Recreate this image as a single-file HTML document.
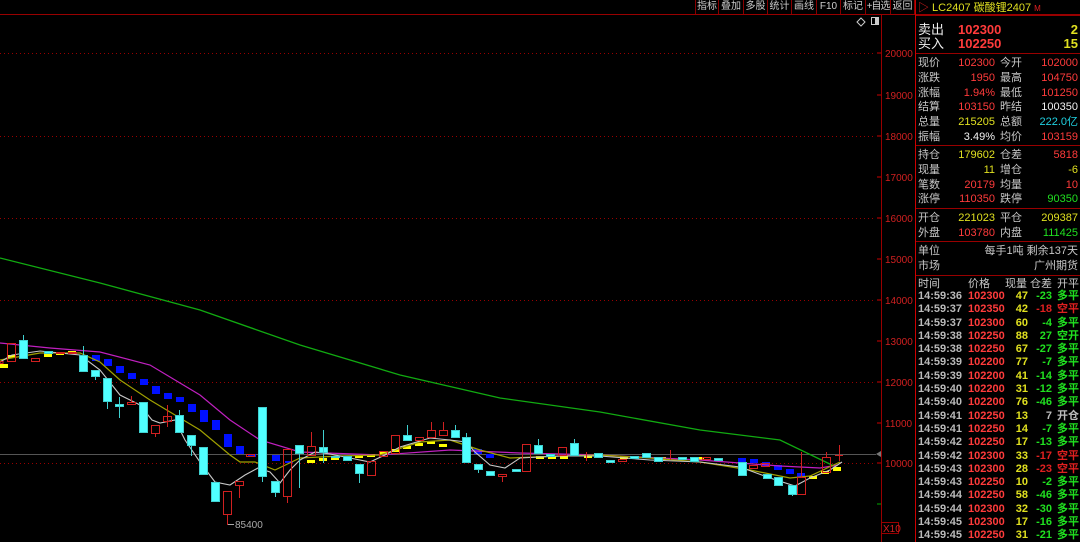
<!DOCTYPE html>
<html><head><meta charset="utf-8"><style>
*{margin:0;padding:0;box-sizing:border-box}
html,body{width:1080px;height:542px;overflow:hidden}
body{background:#000;position:relative;font-family:"Liberation Sans","Noto Sans CJK SC",sans-serif;font-size:12px;color:#c8c8c8}
.a{position:absolute;white-space:nowrap;line-height:14px}
.tb{position:absolute;top:0;height:14px;border-right:1px solid #800;font-size:10px;line-height:13px;text-align:center;color:#ccc;white-space:nowrap;overflow:hidden}
.r{color:#ff3b3b}.y{color:#e0e020}.g{color:#20e020}.w{color:#f0f0f0}.c{color:#20d0e0}.dr{color:#e02020}.gr{color:#bbb}
.ra{text-align:right}
.sep{position:absolute;left:916px;width:164px;height:1px;background:#900}
.q>div{position:relative;height:14.8px}
.t>div{position:relative;height:13.3px}
.t .a{line-height:13px}
</style></head><body>
<svg width="1080" height="542" style="position:absolute;left:0;top:0">
<line x1="0" y1="14.5" x2="1080" y2="14.5" stroke="#900"/>
<line x1="881.5" y1="15" x2="881.5" y2="542" stroke="#900"/>
<line x1="915.5" y1="0" x2="915.5" y2="542" stroke="#c00"/>
<g stroke="#900" stroke-dasharray="1,3">
<line x1="0" y1="53.5" x2="876" y2="53.5"/><line x1="0" y1="136.5" x2="876" y2="136.5"/><line x1="0" y1="218.5" x2="876" y2="218.5"/><line x1="0" y1="300.5" x2="876" y2="300.5"/><line x1="0" y1="382.5" x2="876" y2="382.5"/><line x1="0" y1="463.5" x2="876" y2="463.5"/></g>
<line x1="0" y1="454.5" x2="876" y2="454.5" stroke="#555"/>
<polygon points="876,454 881,451 881,457" fill="#777"/>
<g stroke="#c00"><line x1="877" y1="53" x2="881" y2="53"/><line x1="877" y1="95" x2="881" y2="95"/><line x1="877" y1="136" x2="881" y2="136"/><line x1="877" y1="177" x2="881" y2="177"/><line x1="877" y1="218" x2="881" y2="218"/><line x1="877" y1="259" x2="881" y2="259"/><line x1="877" y1="300" x2="881" y2="300"/><line x1="877" y1="341" x2="881" y2="341"/><line x1="877" y1="382" x2="881" y2="382"/><line x1="877" y1="423" x2="881" y2="423"/><line x1="877" y1="463" x2="881" y2="463"/></g>
<line x1="877" y1="504" x2="881" y2="504" stroke="#0a0"/>
<g fill="#d02020" font-size="10" font-family="Liberation Sans">
<text x="885" y="57">20000</text><text x="885" y="99">19000</text><text x="885" y="140">18000</text><text x="885" y="181">17000</text><text x="885" y="222">16000</text><text x="885" y="263">15000</text><text x="885" y="304">14000</text><text x="885" y="345">13000</text><text x="885" y="386">12000</text><text x="885" y="427">11000</text><text x="885" y="467">10000</text></g>
<rect x="881.5" y="522.5" width="17" height="11" fill="none" stroke="#900"/><text x="883" y="532" fill="#d02020" font-size="10">X10</text>
<path d="M861 18 l4 4 -4 4 -4 -4z" fill="none" stroke="#ccc"/><rect x="871.5" y="17.5" width="7" height="7" fill="none" stroke="#ccc"/><rect x="875" y="18" width="3" height="6" fill="#ccc"/>
<polyline fill="none" stroke="#1a1" stroke-width="1.3" points="0,258 100,283 200,310 300,345 400,375 500,398 600,412 700,430 780,440 836,467"/>
<g fill="#0010ff">
<rect x="92" y="355" width="8" height="6"/><rect x="104" y="359" width="8" height="7"/><rect x="116" y="366" width="8" height="7"/><rect x="128" y="373" width="8" height="6"/><rect x="140" y="379" width="8" height="6"/><rect x="152" y="386" width="8" height="8"/><rect x="164" y="393" width="8" height="6"/><rect x="176" y="397" width="8" height="5"/><rect x="188" y="404" width="8" height="8"/><rect x="200" y="410" width="8" height="12"/><rect x="212" y="420" width="8" height="10"/><rect x="224" y="434" width="8" height="13"/><rect x="236" y="446" width="8" height="8"/><rect x="248" y="454" width="8" height="3"/><rect x="272" y="455" width="8" height="6"/><rect x="285" y="461" width="8" height="2"/>
<rect x="462" y="443" width="8" height="5"/><rect x="474" y="449" width="8" height="5"/><rect x="486" y="454" width="8" height="4"/><rect x="738" y="458" width="8" height="4"/><rect x="750" y="459" width="8" height="4"/><rect x="762" y="462" width="8" height="4"/><rect x="774" y="465" width="8" height="5"/><rect x="786" y="469" width="8" height="5"/><rect x="797" y="473" width="8" height="4"/></g>
<g fill="#ffff00">
<rect x="0" y="364" width="8" height="4"/><rect x="8" y="355" width="8" height="3"/><rect x="20" y="352" width="8" height="3"/><rect x="44" y="354" width="8" height="3"/><rect x="56" y="352" width="8" height="3"/><rect x="68" y="351" width="8" height="3"/>
<rect x="307" y="460" width="8" height="3"/><rect x="319" y="458" width="8" height="3"/><rect x="331" y="457" width="8" height="3"/><rect x="343" y="456" width="8" height="3"/><rect x="355" y="455" width="8" height="3"/><rect x="367" y="454" width="8" height="3"/><rect x="379" y="452" width="8" height="3"/><rect x="391" y="449" width="8" height="3"/><rect x="403" y="446" width="8" height="3"/><rect x="415" y="443" width="8" height="3"/><rect x="427" y="441" width="8" height="3"/><rect x="439" y="444" width="8" height="3"/>
<rect x="536" y="456" width="8" height="3"/><rect x="548" y="456" width="8" height="3"/><rect x="560" y="456" width="8" height="3"/><rect x="584" y="455" width="8" height="3"/><rect x="620" y="456" width="8" height="3"/><rect x="658" y="457" width="8" height="3"/><rect x="696" y="457" width="8" height="3"/>
<rect x="809" y="476" width="8" height="3"/><rect x="821" y="471" width="8" height="3"/><rect x="833" y="467" width="8" height="4"/></g>
<polyline fill="none" stroke="#c020c0" stroke-width="1.2" points="0,343 50,348 100,352 150,365 200,395 230,420 260,440 300,452 380,455 450,450 520,453 600,455 700,460 780,466 820,468 838,465"/>
<polyline fill="none" stroke="#a0a000" stroke-width="1.2" points="0,360 40,353 80,353 100,362 120,380 150,400 180,418 200,430 230,455 240,462 255,462 275,470 300,458 340,456 380,455 420,442 450,440 465,445 480,450 510,458 560,456 600,455 650,458 700,462 750,470 790,478 810,476 840,462"/>
<polyline fill="none" stroke="#c8c8c8" stroke-width="1.1" points="0,362 12,355 40,351 80,355 100,370 120,395 140,405 152,420 160,423 175,420 185,440 200,462 215,482 230,485 245,475 258,468 270,472 280,483 290,470 300,460 315,452 330,454 350,458 370,462 385,455 400,447 430,438 450,440 466,442 475,452 490,465 505,468 520,458 560,456 600,456 650,460 700,462 740,467 770,478 795,486 810,478 830,470 842,462"/>
<g stroke-width="1">
<g fill="#50ffff" stroke="#40d0d0">
<rect x="19.5" y="340.5" width="8" height="18"/><line x1="23.5" y1="335" x2="23.5" y2="340"/>
<rect x="44.5" y="351.5" width="8" height="2"/>
<rect x="79.5" y="355.5" width="8" height="16"/><line x1="83.5" y1="346" x2="83.5" y2="355"/>
<rect x="91.5" y="370.5" width="8" height="6"/><line x1="95.5" y1="376" x2="95.5" y2="380"/>
<rect x="103.5" y="378.5" width="8" height="23"/><line x1="107.5" y1="401" x2="107.5" y2="409"/>
<rect x="115.5" y="404.5" width="8" height="2"/><line x1="119.5" y1="397" x2="119.5" y2="418"/>
<rect x="139.5" y="402.5" width="8" height="30"/>
<rect x="175.5" y="415.5" width="8" height="17"/><line x1="179.5" y1="410" x2="179.5" y2="415"/>
<rect x="187.5" y="435.5" width="8" height="10"/><line x1="191.5" y1="445" x2="191.5" y2="456"/>
<rect x="199.5" y="447.5" width="8" height="27"/>
<rect x="211.5" y="482.5" width="8" height="19"/>
<rect x="258.5" y="407.5" width="8" height="69"/><line x1="262.5" y1="476" x2="262.5" y2="482"/>
<rect x="271.5" y="481.5" width="8" height="11"/><line x1="275.5" y1="492" x2="275.5" y2="497"/>
<rect x="295.5" y="445.5" width="8" height="8"/><line x1="299.5" y1="453" x2="299.5" y2="488"/>
<rect x="319.5" y="447.5" width="8" height="5"/><line x1="323.5" y1="430" x2="323.5" y2="463"/>
<rect x="331.5" y="456.5" width="8" height="1"/>
<rect x="343.5" y="456.5" width="8" height="4"/>
<rect x="355.5" y="464.5" width="8" height="9"/><line x1="359.5" y1="473" x2="359.5" y2="483"/>
<rect x="403.5" y="435.5" width="8" height="5"/><line x1="407.5" y1="425" x2="407.5" y2="435"/>
<rect x="451.5" y="430.5" width="8" height="7"/><line x1="455.5" y1="425" x2="455.5" y2="430"/>
<rect x="462.5" y="437.5" width="8" height="25"/><line x1="466.5" y1="433" x2="466.5" y2="437"/>
<rect x="474.5" y="464.5" width="8" height="5"/><line x1="478.5" y1="469" x2="478.5" y2="473"/>
<rect x="486.5" y="471.5" width="8" height="4"/>
<rect x="512.5" y="469.5" width="8" height="2"/>
<rect x="534.5" y="445.5" width="8" height="8"/><line x1="538.5" y1="439" x2="538.5" y2="445"/>
<rect x="546.5" y="454.5" width="8" height="2"/>
<rect x="570.5" y="443.5" width="8" height="12"/><line x1="574.5" y1="439" x2="574.5" y2="443"/>
<rect x="594.5" y="453.5" width="8" height="4"/>
<rect x="606.5" y="460.5" width="8" height="2"/>
<rect x="630.5" y="456.5" width="8" height="2"/>
<rect x="642.5" y="453.5" width="8" height="4"/>
<rect x="654.5" y="457.5" width="8" height="4"/>
<rect x="678.5" y="457.5" width="8" height="2"/>
<rect x="690.5" y="457.5" width="8" height="4"/>
<rect x="714.5" y="458.5" width="8" height="2"/>
<rect x="738.5" y="462.5" width="8" height="13"/>
<rect x="763.5" y="474.5" width="8" height="4"/>
<rect x="774.5" y="477.5" width="8" height="8"/>
<rect x="788.5" y="485.5" width="8" height="9"/><line x1="792.5" y1="494" x2="792.5" y2="496"/>
</g>
<g fill="none" stroke="#d02020">
<rect x="0" y="361.5" width="3" height="2"/>
<rect x="7.5" y="343.5" width="8" height="18"/>
<rect x="31.5" y="358.5" width="8" height="3"/>
<rect x="56.5" y="352.5" width="8" height="1"/><rect x="68.5" y="352.5" width="8" height="1"/>
<rect x="127.5" y="402.5" width="8" height="2"/><line x1="131.5" y1="396" x2="131.5" y2="402"/>
<rect x="151.5" y="425.5" width="8" height="8"/><line x1="155.5" y1="433" x2="155.5" y2="437"/>
<rect x="163.5" y="416.5" width="8" height="5"/><line x1="167.5" y1="405" x2="167.5" y2="427"/>
<rect x="223.5" y="491.5" width="8" height="23"/><line x1="227.5" y1="514" x2="227.5" y2="525"/>
<rect x="235.5" y="481.5" width="8" height="4"/><line x1="239.5" y1="485" x2="239.5" y2="498"/>
<rect x="246.5" y="454.5" width="8" height="2"/>
<rect x="283.5" y="449.5" width="8" height="47"/><line x1="287.5" y1="496" x2="287.5" y2="503"/>
<rect x="307.5" y="446.5" width="8" height="9"/><line x1="311.5" y1="432" x2="311.5" y2="446"/>
<rect x="367.5" y="461.5" width="8" height="14"/>
<rect x="379.5" y="451.5" width="8" height="5"/>
<rect x="391.5" y="435.5" width="8" height="18"/>
<rect x="415.5" y="437.5" width="8" height="3"/>
<rect x="427.5" y="430.5" width="8" height="7"/><line x1="431.5" y1="422" x2="431.5" y2="430"/>
<rect x="439.5" y="430.5" width="8" height="5"/><line x1="443.5" y1="422" x2="443.5" y2="430"/>
<rect x="498.5" y="474.5" width="8" height="2"/><line x1="502.5" y1="476" x2="502.5" y2="482"/>
<rect x="522.5" y="444.5" width="8" height="27"/>
<rect x="558.5" y="447.5" width="8" height="8"/>
<line x1="586.5" y1="452" x2="586.5" y2="461"/>
<rect x="618.5" y="459.5" width="8" height="2"/>
<line x1="670.5" y1="450" x2="670.5" y2="460"/>
<rect x="702.5" y="457.5" width="8" height="2"/>
<rect x="749.5" y="465.5" width="8" height="3"/>
<rect x="761.5" y="463.5" width="8" height="3"/>
<rect x="797.5" y="477.5" width="8" height="17"/><line x1="801.5" y1="452" x2="801.5" y2="477"/>
<rect x="822.5" y="457.5" width="8" height="15"/><line x1="826.5" y1="452" x2="826.5" y2="457"/>
<line x1="835" y1="455.5" x2="843" y2="455.5"/><line x1="839.5" y1="445" x2="839.5" y2="461"/>
</g></g>
<line x1="228" y1="524.5" x2="234" y2="524.5" stroke="#aaa"/>
<text x="235" y="528" fill="#aaa" font-size="10">85400</text>
</svg>
<div class="tb" style="left:695px;width:24px;border-left:1px solid #800">指标</div>
<div class="tb" style="left:719px;width:25px">叠加</div>
<div class="tb" style="left:744px;width:24px">多股</div>
<div class="tb" style="left:768px;width:24px">统计</div>
<div class="tb" style="left:792px;width:25px">画线</div>
<div class="tb" style="left:817px;width:24px">F10</div>
<div class="tb" style="left:841px;width:25px">标记</div>
<div class="tb" style="left:866px;width:25px;letter-spacing:-1px">+自选</div>
<div class="tb" style="left:891px;width:24px">返回</div>
<div class="a" style="left:918px;top:1px;font-size:11px;color:#e0e020"><span style="color:#e02020">▷</span> LC2407 碳酸锂2407 <span style="color:#e02020;font-size:8px">M</span></div>
<div class="sep" style="top:15px"></div>
<div class="a w" style="left:918px;top:23px;font-size:13px">卖出</div><div class="a r" style="left:958px;top:23px;font-size:13px;font-weight:bold">102300</div><div class="a y ra" style="left:1030px;width:48px;top:23px;font-size:13px;font-weight:bold">2</div>
<div class="a w" style="left:918px;top:37px;font-size:13px">买入</div><div class="a r" style="left:958px;top:37px;font-size:13px;font-weight:bold">102250</div><div class="a y ra" style="left:1030px;width:48px;top:37px;font-size:13px;font-weight:bold">15</div>
<div class="sep" style="top:53px"></div>
<div class="q" style="position:absolute;left:918px;top:56px;width:160px;font-size:11px">
<div><span class="a">现价</span><span class="a r ra" style="left:20px;width:57px">102300</span><span class="a" style="left:82px">今开</span><span class="a r ra" style="left:100px;width:60px">102000</span></div>
<div><span class="a">涨跌</span><span class="a r ra" style="left:20px;width:57px">1950</span><span class="a" style="left:82px">最高</span><span class="a r ra" style="left:100px;width:60px">104750</span></div>
<div><span class="a">涨幅</span><span class="a r ra" style="left:20px;width:57px">1.94%</span><span class="a" style="left:82px">最低</span><span class="a r ra" style="left:100px;width:60px">101250</span></div>
<div><span class="a">结算</span><span class="a r ra" style="left:20px;width:57px">103150</span><span class="a" style="left:82px">昨结</span><span class="a w ra" style="left:100px;width:60px">100350</span></div>
<div><span class="a">总量</span><span class="a y ra" style="left:20px;width:57px">215205</span><span class="a" style="left:82px">总额</span><span class="a c ra" style="left:100px;width:60px">222.0亿</span></div>
<div><span class="a">振幅</span><span class="a w ra" style="left:20px;width:57px">3.49%</span><span class="a" style="left:82px">均价</span><span class="a r ra" style="left:100px;width:60px">103159</span></div>
</div>
<div class="sep" style="top:145px"></div>
<div class="q" style="position:absolute;left:918px;top:148px;width:160px;font-size:11px">
<div><span class="a">持仓</span><span class="a y ra" style="left:20px;width:57px">179602</span><span class="a" style="left:82px">仓差</span><span class="a r ra" style="left:100px;width:60px">5818</span></div>
<div><span class="a">现量</span><span class="a y ra" style="left:20px;width:57px">11</span><span class="a" style="left:82px">增仓</span><span class="a y ra" style="left:100px;width:60px">-6</span></div>
<div><span class="a">笔数</span><span class="a r ra" style="left:20px;width:57px">20179</span><span class="a" style="left:82px">均量</span><span class="a r ra" style="left:100px;width:60px">10</span></div>
<div><span class="a">涨停</span><span class="a r ra" style="left:20px;width:57px">110350</span><span class="a" style="left:82px">跌停</span><span class="a g ra" style="left:100px;width:60px">90350</span></div>
</div>
<div class="sep" style="top:208px"></div>
<div class="q" style="position:absolute;left:918px;top:211px;width:160px;font-size:11px">
<div><span class="a">开仓</span><span class="a y ra" style="left:20px;width:57px">221023</span><span class="a" style="left:82px">平仓</span><span class="a y ra" style="left:100px;width:60px">209387</span></div>
<div><span class="a">外盘</span><span class="a r ra" style="left:20px;width:57px">103780</span><span class="a" style="left:82px">内盘</span><span class="a g ra" style="left:100px;width:60px">111425</span></div>
</div>
<div class="sep" style="top:241px"></div>
<div class="q" style="position:absolute;left:918px;top:244px;width:160px;font-size:11px">
<div><span class="a">单位</span><span class="a ra" style="left:40px;width:120px">每手1吨 剩余137天</span></div>
<div><span class="a">市场</span><span class="a ra" style="left:40px;width:120px">广州期货</span></div>
</div>
<div class="sep" style="top:275px"></div>
<div style="position:absolute;left:918px;top:277px;width:162px;height:14px;font-size:11px">
<span class="a">时间</span><span class="a" style="left:50px">价格</span><span class="a" style="left:87px">现量</span><span class="a" style="left:112px">仓差</span><span class="a" style="left:139px">开平</span>
</div>
<div class="t" style="position:absolute;left:918px;top:290px;width:162px;font-size:11px;font-weight:bold">
<div><span class="a gr">14:59:36</span><span class="a r" style="left:50px">102300</span><span class="a y ra" style="left:84px;width:26px">47</span><span class="a g ra" style="left:108px;width:26px">-23</span><span class="a g" style="left:139px">多平</span></div>
<div><span class="a gr">14:59:37</span><span class="a r" style="left:50px">102350</span><span class="a y ra" style="left:84px;width:26px">42</span><span class="a dr ra" style="left:108px;width:26px">-18</span><span class="a dr" style="left:139px">空平</span></div>
<div><span class="a gr">14:59:37</span><span class="a r" style="left:50px">102300</span><span class="a y ra" style="left:84px;width:26px">60</span><span class="a g ra" style="left:108px;width:26px">-4</span><span class="a g" style="left:139px">多平</span></div>
<div><span class="a gr">14:59:38</span><span class="a r" style="left:50px">102250</span><span class="a y ra" style="left:84px;width:26px">88</span><span class="a g ra" style="left:108px;width:26px">27</span><span class="a g" style="left:139px">空开</span></div>
<div><span class="a gr">14:59:38</span><span class="a r" style="left:50px">102250</span><span class="a y ra" style="left:84px;width:26px">67</span><span class="a g ra" style="left:108px;width:26px">-27</span><span class="a g" style="left:139px">多平</span></div>
<div><span class="a gr">14:59:39</span><span class="a r" style="left:50px">102200</span><span class="a y ra" style="left:84px;width:26px">77</span><span class="a g ra" style="left:108px;width:26px">-7</span><span class="a g" style="left:139px">多平</span></div>
<div><span class="a gr">14:59:39</span><span class="a r" style="left:50px">102200</span><span class="a y ra" style="left:84px;width:26px">41</span><span class="a g ra" style="left:108px;width:26px">-14</span><span class="a g" style="left:139px">多平</span></div>
<div><span class="a gr">14:59:40</span><span class="a r" style="left:50px">102200</span><span class="a y ra" style="left:84px;width:26px">31</span><span class="a g ra" style="left:108px;width:26px">-12</span><span class="a g" style="left:139px">多平</span></div>
<div><span class="a gr">14:59:40</span><span class="a r" style="left:50px">102200</span><span class="a y ra" style="left:84px;width:26px">76</span><span class="a g ra" style="left:108px;width:26px">-46</span><span class="a g" style="left:139px">多平</span></div>
<div><span class="a gr">14:59:41</span><span class="a r" style="left:50px">102250</span><span class="a y ra" style="left:84px;width:26px">13</span><span class="a gr ra" style="left:108px;width:26px">7</span><span class="a gr" style="left:139px">开仓</span></div>
<div><span class="a gr">14:59:41</span><span class="a r" style="left:50px">102250</span><span class="a y ra" style="left:84px;width:26px">14</span><span class="a g ra" style="left:108px;width:26px">-7</span><span class="a g" style="left:139px">多平</span></div>
<div><span class="a gr">14:59:42</span><span class="a r" style="left:50px">102250</span><span class="a y ra" style="left:84px;width:26px">17</span><span class="a g ra" style="left:108px;width:26px">-13</span><span class="a g" style="left:139px">多平</span></div>
<div><span class="a gr">14:59:42</span><span class="a r" style="left:50px">102300</span><span class="a y ra" style="left:84px;width:26px">33</span><span class="a dr ra" style="left:108px;width:26px">-17</span><span class="a dr" style="left:139px">空平</span></div>
<div><span class="a gr">14:59:43</span><span class="a r" style="left:50px">102300</span><span class="a y ra" style="left:84px;width:26px">28</span><span class="a dr ra" style="left:108px;width:26px">-23</span><span class="a dr" style="left:139px">空平</span></div>
<div><span class="a gr">14:59:43</span><span class="a r" style="left:50px">102250</span><span class="a y ra" style="left:84px;width:26px">10</span><span class="a g ra" style="left:108px;width:26px">-2</span><span class="a g" style="left:139px">多平</span></div>
<div><span class="a gr">14:59:44</span><span class="a r" style="left:50px">102250</span><span class="a y ra" style="left:84px;width:26px">58</span><span class="a g ra" style="left:108px;width:26px">-46</span><span class="a g" style="left:139px">多平</span></div>
<div><span class="a gr">14:59:44</span><span class="a r" style="left:50px">102300</span><span class="a y ra" style="left:84px;width:26px">32</span><span class="a g ra" style="left:108px;width:26px">-30</span><span class="a g" style="left:139px">多平</span></div>
<div><span class="a gr">14:59:45</span><span class="a r" style="left:50px">102300</span><span class="a y ra" style="left:84px;width:26px">17</span><span class="a g ra" style="left:108px;width:26px">-16</span><span class="a g" style="left:139px">多平</span></div>
<div><span class="a gr">14:59:45</span><span class="a r" style="left:50px">102250</span><span class="a y ra" style="left:84px;width:26px">31</span><span class="a g ra" style="left:108px;width:26px">-21</span><span class="a g" style="left:139px">多平</span></div>
</div>
</body></html>
